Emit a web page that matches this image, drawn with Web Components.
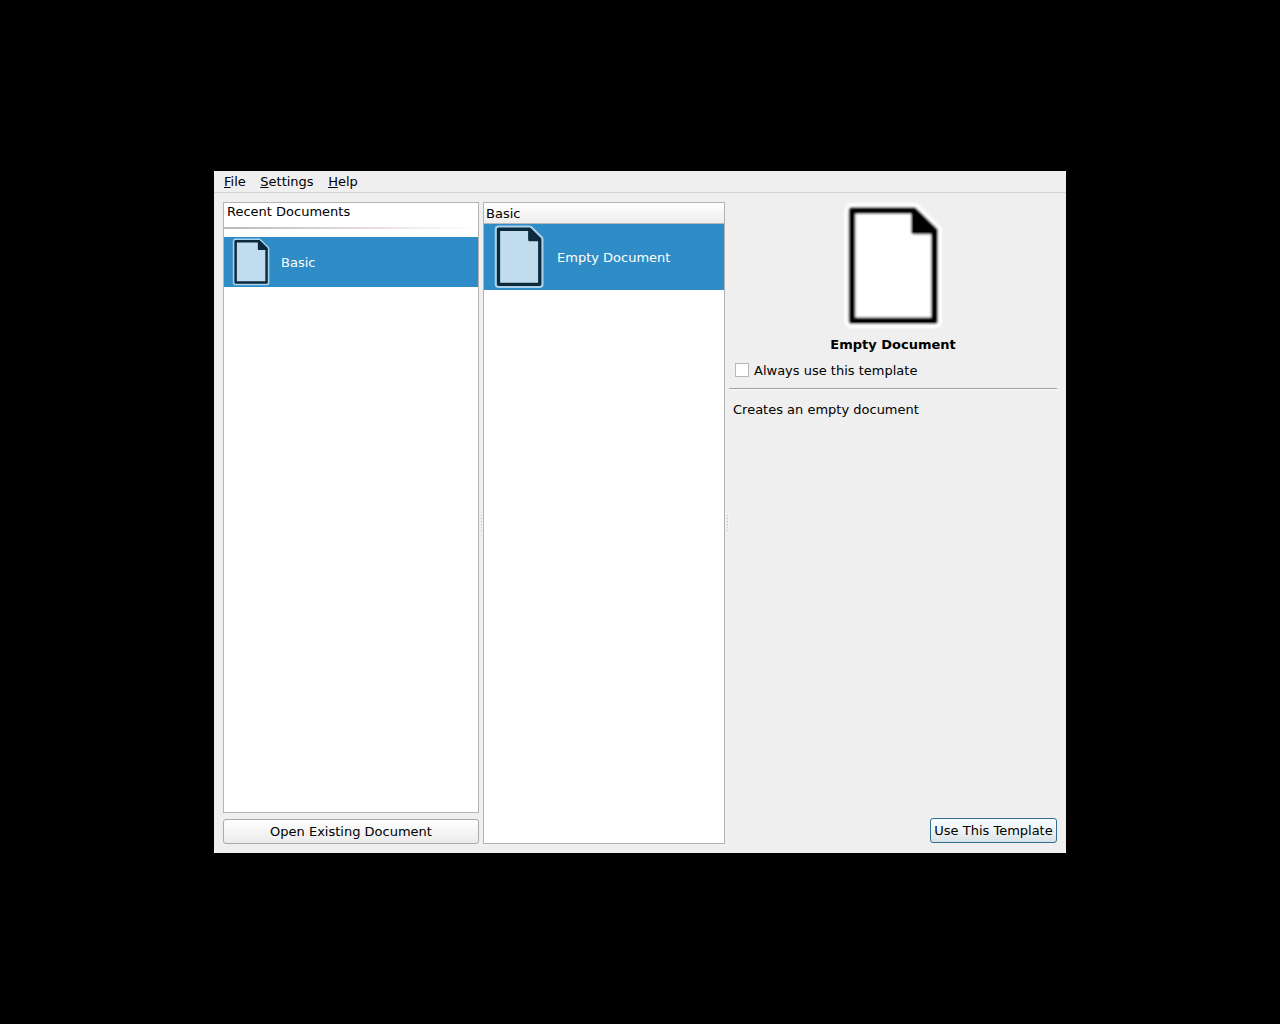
<!DOCTYPE html>
<html lang="en">
<head>
<meta charset="utf-8">
<title>Templates</title>
<style>
html,body{margin:0;height:100%;background:#000}
body{display:flex;align-items:center;justify-content:center;font:13px/15px "DejaVu Sans",sans-serif;color:#000;overflow:hidden}
</style>
</head>
<body>
<start-window></start-window>
<script>
function define(name, html, setup) {
  const t = document.createElement('template');
  t.innerHTML = html;
  customElements.define(name, class extends HTMLElement {
    constructor() {
      super();
      this.attachShadow({mode: 'open'}).append(t.content.cloneNode(true));
    }
    connectedCallback() { if (setup) setup(this); }
  });
}

define('menu-bar', `<style>
:host{display:flex;box-sizing:border-box;height:22px;padding:3px 10px 0;gap:14.5px;border-bottom:1px solid #d4d4d4;background:#efeff0}
::slotted(span){white-space:pre}
</style><slot></slot>`);

define('document-icon', `<style>
:host{display:block;flex:none;width:var(--size,128px);height:var(--size,128px);--ink:#000;--paper:#fff;--halo:#fff}
:host([selected]){--ink:#0e2a3c;--paper:#c1dcef;--halo:#a9d1ec}
svg{display:block;width:100%;height:100%}
</style><svg viewBox="0 0 128 128">
<defs><filter id="soft" x="-10%" y="-10%" width="120%" height="120%"><feGaussianBlur stdDeviation=".9"/></filter></defs>
<g filter="url(#soft)" stroke-linejoin="round">
<path d="M23 8.5H85L105.5 28.5V118.7H23Z" fill="none" stroke="var(--halo)" stroke-width="15"/>
<path d="M23 8.5H85L105.5 28.5V118.7H23Z" fill="var(--paper)" stroke="var(--ink)" stroke-width="6.6"/>
<path d="M84.5 8.5H85.5L105.5 28.5V30H84.5Z" fill="var(--ink)" stroke="var(--ink)" stroke-width="4.5"/>
</g></svg>`);

define('list-row', `<style>
:host{display:flex;align-items:center;box-sizing:border-box;background:#308cc6;color:#fff}
</style><slot name="icon"></slot><slot></slot>`);

define('push-button', `<style>
:host{display:block}
button{display:flex;align-items:center;justify-content:center;box-sizing:border-box;width:100%;height:25px;padding:0;border:1px solid #aaa;border-radius:3px;background:linear-gradient(#fff,#f9f9f9 30%,#ebebeb);font:inherit;color:#000;white-space:nowrap}
:host([primary]) button{border-color:#306f91;background:linear-gradient(#fafdff,#edf3f6 50%,#d9e2e7)}
</style><button><slot></slot></button>`);

define('recent-list', `<style>
:host{display:flex;flex-direction:column;box-sizing:border-box;flex:1;border:1px solid #b4b4b4;background:#fff}
.title{height:24px;padding:1px 3px 0;box-sizing:border-box}
.rule{height:2px;margin-bottom:8px;background:linear-gradient(90deg,#b5babd,#e6dbe3 55%,#fff)}
list-row{height:50px;padding-left:3px;--size:48px;gap:6px}
</style><div class="title">Recent Documents</div><div class="rule"></div>
<list-row><document-icon slot="icon" selected></document-icon><span>Basic</span></list-row>`);

define('template-list', `<style>
:host{display:flex;flex-direction:column;box-sizing:border-box;flex:none;width:242px;border:1px solid #b4b4b4;background:#fff}
.head{box-sizing:border-box;height:21px;padding:3px 2px 0;border-bottom:1px solid #b8b8b8;background:linear-gradient(#fff,#eee)}
list-row{height:66px;padding-left:3px;--size:64px;gap:6px}
</style><div class="head">Basic</div>
<list-row><document-icon slot="icon" selected></document-icon><span>Empty Document</span></list-row>`);

define('split-handle', `<style>
:host{display:flex;flex-direction:column;flex:none;box-sizing:border-box;width:4px;padding-left:2px;justify-content:center;gap:2px}
i{width:2px;height:1px;background:linear-gradient(90deg,#bdbdbd 50%,#fff 50%)}
</style>` + '<i></i>'.repeat(6));

define('check-option', `<style>
:host{display:flex;align-items:flex-start;gap:5px}
i{box-sizing:border-box;width:14px;height:14px;border:1px solid #b8b8b8;background:#fff}
</style><i></i><slot></slot>`);

define('template-details', `<style>
:host{display:flex;flex-direction:column;flex:1}
document-icon{align-self:center}
b{text-align:center;margin-top:7px}
check-option{margin:11px 6px 0}
.rule{height:1px;margin-top:10px;background:#a0a0a0;border-bottom:1px solid #fafafa}
p{margin:12px 4px 0}
push-button{width:127px;align-self:flex-end;margin:auto 0 1px}
</style><document-icon></document-icon><b>Empty Document</b>
<check-option>Always use this template</check-option>
<div class="rule"></div><p>Creates an empty document</p>
<push-button primary>Use This Template</push-button>`);

define('start-window', `<style>
:host{display:flex;flex-direction:column;width:852px;height:682px;background:#efefef}
main{display:flex;flex:1;padding:9px}
.left{display:flex;flex-direction:column;gap:6px;width:256px}
u{text-decoration:underline;text-underline-offset:1px;text-decoration-thickness:1px}
</style><menu-bar><span><u>F</u>ile</span><span><u>S</u>ettings</span><span><u>H</u>elp</span></menu-bar>
<main><div class="left"><recent-list></recent-list><push-button>Open Existing Document</push-button></div>
<split-handle></split-handle><template-list></template-list><split-handle></split-handle>
<template-details></template-details></main>`);
</script>
</body>
</html>
